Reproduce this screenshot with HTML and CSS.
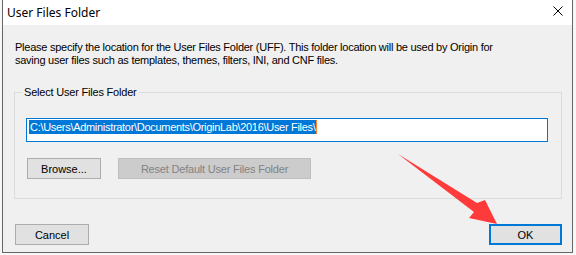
FILE: index.html
```html
<!DOCTYPE html>
<html>
<head>
    <title>User Files Folder</title>
    <link rel="stylesheet" href="styles.css">
</head>
<body>
    <div class="window">
        <div class="titlebar">
            <span class="title">User Files Folder</span>
            <svg class="close" width="10" height="10" viewBox="0 0 10 10">
                <path d="M0.5 0.5 L9.5 9.5 M9.5 0.5 L0.5 9.5" stroke="#000" stroke-width="1" fill="none"/>
            </svg>
        </div>
        <div class="content">
            <p class="intro">Please specify the location for the User Files Folder (UFF). This folder location will be used by Origin for<br>saving user files such as templates, themes, filters, INI, and CNF files.</p>
            <fieldset class="group">
                <legend>Select User Files Folder</legend>
                <div class="path-box"><span class="sel">C:\Users\Administrator\Documents\OriginLab\2016\User Files\</span><span class="caret"></span></div>
                <div class="row">
                    <button class="btn browse">Browse...</button>
                    <button class="btn reset" disabled>Reset Default User Files Folder</button>
                </div>
            </fieldset>
            <div class="footer">
                <button class="btn cancel">Cancel</button>
                <button class="btn ok">OK</button>
            </div>
        </div>
    </div>

    <!-- red pointer arrow drawn over the dialog -->
    <svg class="arrow" width="576" height="255" viewBox="0 0 576 255">
        <polygon points="398,154 477,203 485,200 497,224 469,218 474,212" fill="#fe3a3a"/>
    </svg>
</body>
</html>
```

FILE: styles.css
```css
body {
    margin: 0;
    width: 576px;
    height: 255px;
    overflow: hidden;
    background-color: #f7f7f7;
    font-family: "Liberation Sans", Arial, sans-serif;
    font-size: 11px;
    color: #000;
}
.window {
    margin-left: 2px;
    width: 569px;
    height: 252px;
    border: 1px solid #666;
    border-top: none;
    background-color: #f0f0f0;
    display: flex;
    flex-direction: column;
}
.titlebar {
    height: 25px;
    background-color: #fff;
    display: flex;
    align-items: center;
    justify-content: space-between;
    padding: 0 9px 0 4px;
    flex-shrink: 0;
}
.title {
    font-family: "Noto Sans", "Open Sans", sans-serif;
    font-size: 12px;
    padding-bottom: 1px;
}
.close {
    display: block;
    margin-bottom: 3px;
}
.content {
    flex: 1;
    display: flex;
    flex-direction: column;
}
.intro {
    margin: 16px 0 0 12px;
    line-height: 13px;
    letter-spacing: -0.25px;
}
.group {
    margin: 19px 10px 0 11px;
    padding: 19px 13px 19px 11px;
    border: 1px solid #dcdcdc;
    min-width: 0;
}
.group legend {
    margin-left: -4px;
    padding: 0 2px;
    line-height: 13px;
    letter-spacing: -0.2px;
}
.path-box {
    border: 1px solid #0078d7;
    background-color: #fff;
    padding: 1px 2px 0 2px;
    box-sizing: border-box;
    height: 24px;
    display: flex;
    align-items: flex-start;
}
.sel {
    background-color: #0078d7;
    color: #fff;
    line-height: 14px;
    letter-spacing: -0.3px;
    padding-left: 1px;
}
.caret {
    width: 1px;
    height: 14px;
    background-color: #ff8729;
}
.row {
    display: flex;
    gap: 17px;
    margin-top: 16px;
    padding-left: 1px;
}
.btn {
    height: 21px;
    border: 1px solid #adadad;
    background-color: #e1e1e1;
    font-family: "Liberation Sans", Arial, sans-serif;
    font-size: 11px;
    color: #000;
    padding: 0;
    margin: 0;
}
.browse {
    width: 74px;
}
.reset {
    width: 193px;
    background-color: #cccccc;
    border-color: #bfbfbf;
    color: #838383;
    letter-spacing: -0.2px;
}
.footer {
    margin-top: auto;
    display: flex;
    justify-content: space-between;
    padding: 0 10px 7px 12px;
}
.cancel {
    width: 74px;
}
.ok {
    width: 73px;
    border: 2px solid #0078d7;
}
.arrow {
    position: absolute;
    top: 0;
    left: 0;
}
```
